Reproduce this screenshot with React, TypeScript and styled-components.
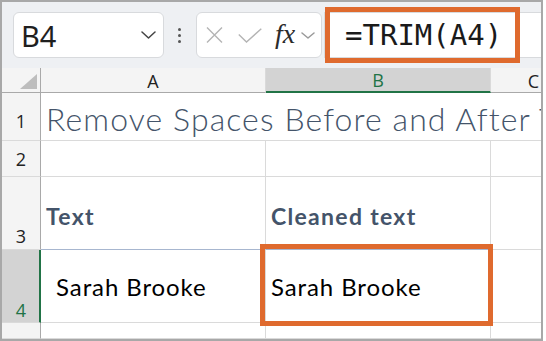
import React from 'react';
import styled, { createGlobalStyle, css } from 'styled-components';

const GlobalStyle = createGlobalStyle`
  html, body { margin: 0; padding: 0; background: #ffffff; }
  body { width: 546px; height: 341px; overflow: hidden; }
`;

const ORANGE = '#df6a2e';
const GREEN = '#217346';
const HEAD_BG = '#f4f4f4';
const SEL_BG = '#d3d3d3';
const GRID = '#dadada';
const HEAD_LINE = '#a9a9a9';
const SLATE = '#44546a';

const Frame = styled.div`
  width: 543px;
  height: 341px;
  box-sizing: border-box;
  border: 2px solid #a8a8a8;
  background: #eef0f3;
  display: flex;
  flex-direction: column;
  overflow: hidden;
`;

const Toolbar = styled.div`
  height: 66px;
  flex: none;
  display: flex;
  align-items: center;
  padding-left: 11px;
  box-sizing: border-box;
  background: #eef0f3;
`;

const NameBox = styled.div`
  width: 151px;
  height: 46px;
  box-sizing: border-box;
  background: #ffffff;
  border: 1px solid #d8dadd;
  border-radius: 6px;
  display: flex;
  align-items: center;
  justify-content: space-between;
  padding: 0 7px 0 7px;
`;

const NameText = styled.span`
  font-family: "Noto Sans", "Open Sans", sans-serif;
  font-size: 29px;
  line-height: 1;
  color: #1f1f1f;
`;

const Dots = styled.div`
  display: flex;
  flex-direction: column;
  gap: 3px;
  margin: 0 15px 0 14px;
`;

const Dot = styled.span`
  width: 3px;
  height: 3px;
  border-radius: 50%;
  background: #555555;
`;

const FxBox = styled.div`
  width: 126px;
  height: 46px;
  box-sizing: border-box;
  background: #ffffff;
  border: 1px solid #d8dadd;
  border-radius: 6px;
  display: flex;
  align-items: center;
  padding-left: 9px;
`;

const IconSlot = styled.span<{ $gap: number }>`
  display: flex;
  align-items: center;
  margin-right: ${(p) => p.$gap}px;
`;

const FxLabel = styled.span`
  font-family: "Liberation Serif", "DejaVu Serif", serif;
  font-style: italic;
  font-size: 28px;
  line-height: 1;
  color: #2b2b2b;
  margin-right: 6px;
  margin-top: -3px;
  margin-left: -1px;
`;

const FormulaInput = styled.div`
  position: relative;
  flex: 1;
  height: 46px;
  margin-left: 2px;
  box-sizing: border-box;
  background: #ffffff;
  border: 1px solid #d8dadd;
  border-right: none;
  display: flex;
  align-items: center;
  padding-left: 20px;
`;

const FormulaText = styled.span`
  font-family: "DejaVu Sans Mono", "Liberation Mono", monospace;
  font-size: 29px;
  line-height: 1;
  color: #1a1a1a;
  position: relative;
  z-index: 1;
`;

const Highlight = styled.div<{ $l: number; $t: number; $w: number; $h: number }>`
  position: absolute;
  left: ${(p) => p.$l}px;
  top: ${(p) => p.$t}px;
  width: ${(p) => p.$w}px;
  height: ${(p) => p.$h}px;
  box-sizing: border-box;
  border: 5px solid ${ORANGE};
  pointer-events: none;
  z-index: 2;
`;

const Sheet = styled.div`
  position: relative;
  flex: 1;
  background: #ffffff;
  display: grid;
  grid-template-columns: 39px 225px 225px 86px;
  grid-template-rows: 25px 48px 36px 73px 73px 1fr;
`;

const Corner = styled.div`
  background: ${HEAD_BG};
  border-right: 1px solid ${HEAD_LINE};
  border-bottom: 1px solid ${HEAD_LINE};
  display: flex;
  align-items: flex-end;
  justify-content: flex-end;
  padding: 0 3px 3px 0;
`;

const Triangle = styled.span`
  width: 0;
  height: 0;
  border-left: 17px solid transparent;
  border-bottom: 15px solid #bdbdbd;
`;

const headerFont = css`
  font-family: "Open Sans", "Noto Sans", sans-serif;
  font-size: 18px;
  line-height: 1;
`;

const ColHeader = styled.div<{ $selected?: boolean }>`
  ${headerFont};
  box-sizing: border-box;
  background: ${(p) => (p.$selected ? SEL_BG : HEAD_BG)};
  border-right: 1px solid ${GRID};
  border-bottom: ${(p) => (p.$selected ? `2px solid ${GREEN}` : `1px solid ${HEAD_LINE}`)};
  color: ${(p) => (p.$selected ? GREEN : '#222222')};
  display: flex;
  align-items: center;
  justify-content: center;
  padding-top: 1px;
`;

const RowHeader = styled.div<{ $selected?: boolean; $pad: number }>`
  ${headerFont};
  box-sizing: border-box;
  background: ${(p) => (p.$selected ? SEL_BG : HEAD_BG)};
  border-right: ${(p) => (p.$selected ? `2px solid ${GREEN}` : `1px solid ${HEAD_LINE}`)};
  border-bottom: 1px solid ${GRID};
  color: ${(p) => (p.$selected ? GREEN : '#222222')};
  display: flex;
  align-items: flex-end;
  justify-content: center;
  padding-bottom: ${(p) => p.$pad}px;
  padding-left: ${(p) => (p.$selected ? 1 : 0)}px;
`;

const Cell = styled.div<{ $heading?: boolean; $span?: boolean; $indent?: number }>`
  box-sizing: border-box;
  background: #ffffff;
  border-right: ${(p) => (p.$span ? 'none' : `1px solid ${GRID}`)};
  border-bottom: 1px solid ${(p) => (p.$heading ? '#a7b6cf' : GRID)};
  display: flex;
  align-items: center;
  padding-left: ${(p) => p.$indent ?? 5}px;
  white-space: pre;
  overflow: hidden;
  ${(p) => p.$span && css`grid-column: 2 / -1;`}
`;

const Title = styled.span`
  font-family: Lato, "Open Sans", sans-serif;
  font-weight: 300;
  font-size: 32px;
  letter-spacing: 1.1px;
  color: ${SLATE};
  line-height: 1;
  margin-top: 4px;
`;

const HeadingText = styled.span`
  font-family: Lato, "Open Sans", sans-serif;
  font-weight: 700;
  font-size: 23px;
  letter-spacing: 1.3px;
  color: ${SLATE};
  line-height: 1;
  margin-top: 6px;
`;

const ValueText = styled.span`
  font-family: Lato, "Open Sans", sans-serif;
  font-size: 24px;
  letter-spacing: 0.9px;
  color: #000000;
  line-height: 1;
  margin-top: 2px;
`;

const Chevron = ({ w, h, color }: { w: number; h: number; color: string }) => (
  <svg width={w} height={h} viewBox={`0 0 ${w} ${h}`} fill="none">
    <path d={`M1 1 L${w / 2} ${h - 1} L${w - 1} 1`} stroke={color} strokeWidth="1.5" strokeLinecap="round" strokeLinejoin="round" />
  </svg>
);

const CrossIcon = () => (
  <svg width="17" height="16" viewBox="0 0 17 16" fill="none">
    <path d="M1 0.5 L16 15.5 M16 0.5 L1 15.5" stroke="#b4b4b4" strokeWidth="1.4" />
  </svg>
);

const CheckIcon = () => (
  <svg width="24" height="15" viewBox="0 0 24 15" fill="none">
    <path d="M0.8 6.5 L8.5 14 L23.3 0.8" stroke="#b4b4b4" strokeWidth="1.4" />
  </svg>
);

export default function App() {
  return (
    <>
      <GlobalStyle />
      <Frame>
        <Toolbar>
          <NameBox>
            <NameText>B4</NameText>
            <Chevron w={15} h={8} color="#444444" />
          </NameBox>
          <Dots>
            <Dot />
            <Dot />
            <Dot />
          </Dots>
          <FxBox>
            <IconSlot $gap={15}>
              <CrossIcon />
            </IconSlot>
            <IconSlot $gap={14}>
              <CheckIcon />
            </IconSlot>
            <FxLabel>fx</FxLabel>
            <Chevron w={14} h={7} color="#9a9a9a" />
          </FxBox>
          <FormulaInput>
            <Highlight $l={0} $t={-6} $w={195} $h={56} />
            <FormulaText>=TRIM(A4)</FormulaText>
          </FormulaInput>
        </Toolbar>
        <Sheet>
          <Corner>
            <Triangle />
          </Corner>
          <ColHeader>A</ColHeader>
          <ColHeader $selected>B</ColHeader>
          <ColHeader>C</ColHeader>

          <RowHeader $pad={10}>1</RowHeader>
          <Cell $span>
            <Title>Remove Spaces Before and After Text</Title>
          </Cell>

          <RowHeader $pad={8}>2</RowHeader>
          <Cell />
          <Cell />
          <Cell />

          <RowHeader $pad={4}>3</RowHeader>
          <Cell $heading>
            <HeadingText>Text</HeadingText>
          </Cell>
          <Cell $heading>
            <HeadingText>Cleaned text</HeadingText>
          </Cell>
          <Cell />

          <RowHeader $selected $pad={3}>4</RowHeader>
          <Cell $indent={1}>
            <ValueText>{'  Sarah Brooke'}</ValueText>
          </Cell>
          <Cell>
            <ValueText>Sarah Brooke</ValueText>
          </Cell>
          <Cell />

          <RowHeader $pad={0} />
          <Cell />
          <Cell />
          <Cell />

          <Highlight $l={258} $t={176} $w={233} $h={82} />
        </Sheet>
      </Frame>
    </>
  );
}
